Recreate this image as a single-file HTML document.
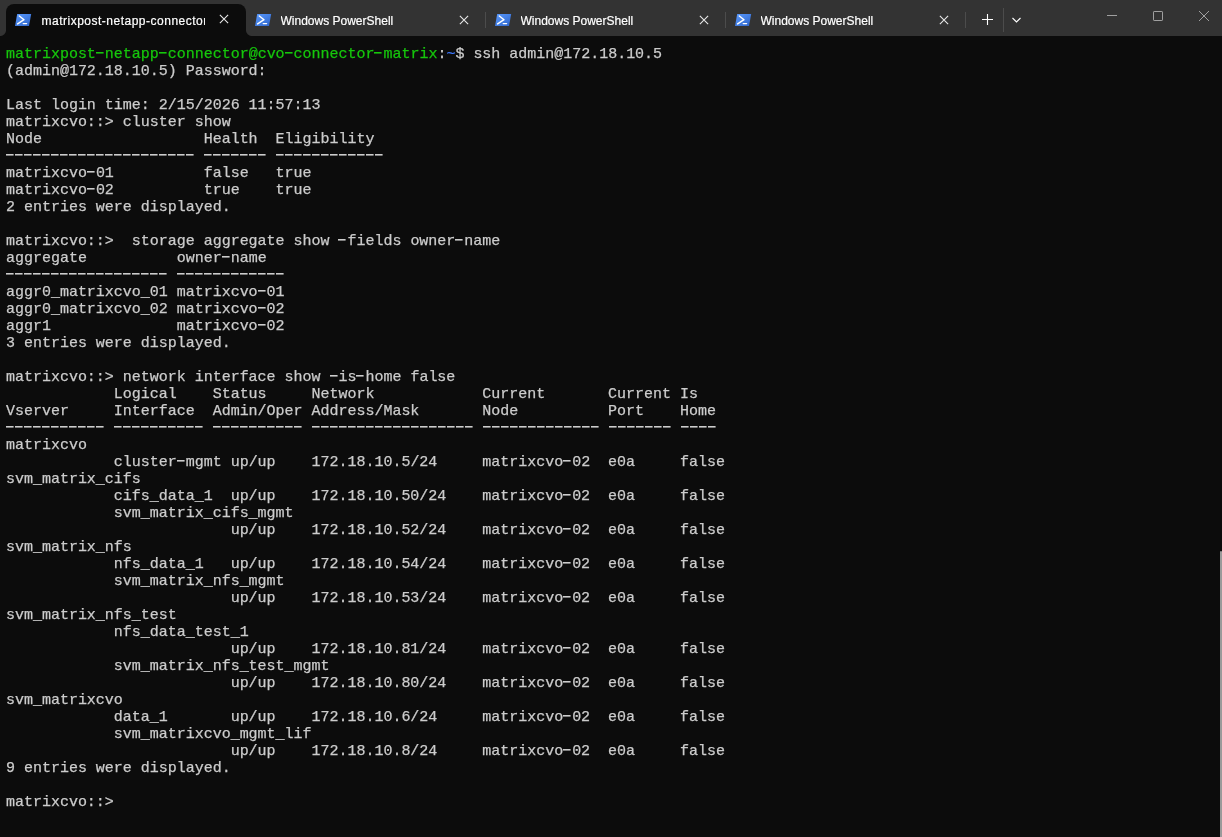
<!DOCTYPE html>
<html><head><meta charset="utf-8">
<style>
html,body{margin:0;padding:0;width:1222px;height:837px;overflow:hidden;background:#0c0c0c;}
#bar{will-change:transform;position:absolute;left:0;top:0;width:1222px;height:36px;background:#333333;}
.tab{position:absolute;top:4px;height:32px;width:240px;}
.tab.active{background:#0c0c0c;border-radius:8px 8px 0 0;}
.tab.active:before,.tab.active:after{content:"";position:absolute;bottom:0;width:6px;height:6px;background:transparent;}
.tab.active:before{left:-6px;background:radial-gradient(circle at 0 0,transparent 5.5px,#0c0c0c 6.5px);}
.tab.active:after{right:-6px;background:radial-gradient(circle at 100% 0,transparent 5.5px,#0c0c0c 6.5px);}
.tab svg.ic{position:absolute;left:9px;top:10.2px;}
.tab .t{position:absolute;left:34.5px;top:9px;font:12px/16px "Liberation Sans",sans-serif;color:#ffffff;-webkit-text-stroke:0.2px #fff;white-space:nowrap;overflow:hidden;width:180px;}
.tab svg.x{position:absolute;left:212.4px;top:10.4px;}
.tab.active svg.x{top:9.4px;}
.sep{position:absolute;width:1px;background:#4c4c4c;}
#term{will-change:transform;position:absolute;left:6px;top:46px;margin:0;letter-spacing:-0.015625px;font:15px/17px "Liberation Mono",monospace;color:#cccccc;white-space:pre;-webkit-text-stroke:0.25px #cccccc;}
i{font-style:normal;color:transparent;-webkit-text-stroke-width:0;background:linear-gradient(#cccccc,#cccccc) 0px 5.9px/7.6px 1.6px no-repeat;}
.g i{background-image:linear-gradient(#16c60c,#16c60c);}
.g{color:#16c60c;-webkit-text-stroke-color:#16c60c;}
.b{color:#3b78ff;-webkit-text-stroke-color:#3b78ff;}
#sb{position:absolute;left:1220px;top:551px;width:2px;height:286px;background:#9a9a9a;border-radius:1px 1px 0 0;}
</style></head><body>
<svg width="0" height="0" style="position:absolute">
  <defs>
    <linearGradient id="psg" x1="0" y1="0" x2="1" y2="1">
      <stop offset="0" stop-color="#5a9bff"/>
      <stop offset="1" stop-color="#2d63c8"/>
    </linearGradient>
  </defs>
</svg>
<div id="bar">
  <div class="tab active" style="left:6px">
    <svg class="ic" width="18" height="14"><path d="M2.2 0.1 H16.2 L14 12 H0 Z" fill="url(#psg)"/>
      <path d="M4.3 2 L9 5.7 L2.6 9.9" fill="none" stroke="#fff" stroke-width="1.45" stroke-linecap="round" stroke-linejoin="round"/>
      <path d="M8.2 9.6 H11.6" fill="none" stroke="#fff" stroke-width="1.3" stroke-linecap="round"/></svg>
    <div class="t" style="width:163px;left:35.5px;letter-spacing:0.5px">matrixpost-netapp-connector</div>
    <svg class="x" width="12" height="12"><path d="M1.88 1.88 L10.12 10.12 M10.12 1.88 L1.88 10.12" stroke="#e6e6e6" stroke-width="1.1" fill="none"/></svg>
  </div>
  <div class="tab" style="left:246px">
    <svg class="ic" width="18" height="14"><path d="M2.2 0.1 H16.2 L14 12 H0 Z" fill="url(#psg)"/>
      <path d="M4.3 2 L9 5.7 L2.6 9.9" fill="none" stroke="#fff" stroke-width="1.45" stroke-linecap="round" stroke-linejoin="round"/>
      <path d="M8.2 9.6 H11.6" fill="none" stroke="#fff" stroke-width="1.3" stroke-linecap="round"/></svg>
    <div class="t">Windows PowerShell</div>
    <svg class="x" width="12" height="12"><path d="M1.88 1.88 L10.12 10.12 M10.12 1.88 L1.88 10.12" stroke="#e6e6e6" stroke-width="1.1" fill="none"/></svg>
  </div>
  <div class="sep" style="left:485px;top:12px;height:16px"></div>
  <div class="tab" style="left:486px">
    <svg class="ic" width="18" height="14"><path d="M2.2 0.1 H16.2 L14 12 H0 Z" fill="url(#psg)"/>
      <path d="M4.3 2 L9 5.7 L2.6 9.9" fill="none" stroke="#fff" stroke-width="1.45" stroke-linecap="round" stroke-linejoin="round"/>
      <path d="M8.2 9.6 H11.6" fill="none" stroke="#fff" stroke-width="1.3" stroke-linecap="round"/></svg>
    <div class="t">Windows PowerShell</div>
    <svg class="x" width="12" height="12"><path d="M1.88 1.88 L10.12 10.12 M10.12 1.88 L1.88 10.12" stroke="#e6e6e6" stroke-width="1.1" fill="none"/></svg>
  </div>
  <div class="sep" style="left:725px;top:12px;height:16px"></div>
  <div class="tab" style="left:726px">
    <svg class="ic" width="18" height="14"><path d="M2.2 0.1 H16.2 L14 12 H0 Z" fill="url(#psg)"/>
      <path d="M4.3 2 L9 5.7 L2.6 9.9" fill="none" stroke="#fff" stroke-width="1.45" stroke-linecap="round" stroke-linejoin="round"/>
      <path d="M8.2 9.6 H11.6" fill="none" stroke="#fff" stroke-width="1.3" stroke-linecap="round"/></svg>
    <div class="t">Windows PowerShell</div>
    <svg class="x" width="12" height="12"><path d="M1.88 1.88 L10.12 10.12 M10.12 1.88 L1.88 10.12" stroke="#e6e6e6" stroke-width="1.1" fill="none"/></svg>
  </div>
  <div class="sep" style="left:965px;top:12px;height:16px"></div>
  <svg style="position:absolute;left:980px;top:12px" width="16" height="16"><path d="M2 7.5 H13 M7.5 2 V13" stroke="#ffffff" stroke-width="1.1" fill="none"/></svg>
  <div class="sep" style="left:1003px;top:8px;height:24px"></div>
  <svg style="position:absolute;left:1009px;top:14px" width="16" height="12"><path d="M3.5 4 L7.5 8 L11.5 4" stroke="#ffffff" stroke-width="1.1" fill="none"/></svg>
  <svg style="position:absolute;left:1100px;top:8px" width="122" height="20">
    <path d="M7 7.5 H17" stroke="#a0a0a0" stroke-width="1" fill="none"/>
    <rect x="53.5" y="3.5" width="9" height="9" rx="0.6" stroke="#a0a0a0" stroke-width="1" fill="none"/>
    <path d="M99 3 L109 13 M109 3 L99 13" stroke="#a0a0a0" stroke-width="1" fill="none"/>
  </svg>
</div>
<pre id="term"><span class="g">matrixpost<i>-</i>netapp<i>-</i>connector@cvo<i>-</i>connector<i>-</i>matrix</span>:<span class="b">~</span>$ ssh admin@172.18.10.5
(admin@172.18.10.5) Password:

Last login time: 2/15/2026 11:57:13
matrixcvo::&gt; cluster show
Node                  Health  Eligibility
<i>-</i><i>-</i><i>-</i><i>-</i><i>-</i><i>-</i><i>-</i><i>-</i><i>-</i><i>-</i><i>-</i><i>-</i><i>-</i><i>-</i><i>-</i><i>-</i><i>-</i><i>-</i><i>-</i><i>-</i><i>-</i> <i>-</i><i>-</i><i>-</i><i>-</i><i>-</i><i>-</i><i>-</i> <i>-</i><i>-</i><i>-</i><i>-</i><i>-</i><i>-</i><i>-</i><i>-</i><i>-</i><i>-</i><i>-</i><i>-</i>
matrixcvo<i>-</i>01          false   true
matrixcvo<i>-</i>02          true    true
2 entries were displayed.

matrixcvo::&gt;  storage aggregate show <i>-</i>fields owner<i>-</i>name
aggregate          owner<i>-</i>name
<i>-</i><i>-</i><i>-</i><i>-</i><i>-</i><i>-</i><i>-</i><i>-</i><i>-</i><i>-</i><i>-</i><i>-</i><i>-</i><i>-</i><i>-</i><i>-</i><i>-</i><i>-</i> <i>-</i><i>-</i><i>-</i><i>-</i><i>-</i><i>-</i><i>-</i><i>-</i><i>-</i><i>-</i><i>-</i><i>-</i>
aggr0_matrixcvo_01 matrixcvo<i>-</i>01
aggr0_matrixcvo_02 matrixcvo<i>-</i>02
aggr1              matrixcvo<i>-</i>02
3 entries were displayed.

matrixcvo::&gt; network interface show <i>-</i>is<i>-</i>home false
            Logical    Status     Network            Current       Current Is
Vserver     Interface  Admin/Oper Address/Mask       Node          Port    Home
<i>-</i><i>-</i><i>-</i><i>-</i><i>-</i><i>-</i><i>-</i><i>-</i><i>-</i><i>-</i><i>-</i> <i>-</i><i>-</i><i>-</i><i>-</i><i>-</i><i>-</i><i>-</i><i>-</i><i>-</i><i>-</i> <i>-</i><i>-</i><i>-</i><i>-</i><i>-</i><i>-</i><i>-</i><i>-</i><i>-</i><i>-</i> <i>-</i><i>-</i><i>-</i><i>-</i><i>-</i><i>-</i><i>-</i><i>-</i><i>-</i><i>-</i><i>-</i><i>-</i><i>-</i><i>-</i><i>-</i><i>-</i><i>-</i><i>-</i> <i>-</i><i>-</i><i>-</i><i>-</i><i>-</i><i>-</i><i>-</i><i>-</i><i>-</i><i>-</i><i>-</i><i>-</i><i>-</i> <i>-</i><i>-</i><i>-</i><i>-</i><i>-</i><i>-</i><i>-</i> <i>-</i><i>-</i><i>-</i><i>-</i>
matrixcvo
            cluster<i>-</i>mgmt up/up    172.18.10.5/24     matrixcvo<i>-</i>02  e0a     false
svm_matrix_cifs
            cifs_data_1  up/up    172.18.10.50/24    matrixcvo<i>-</i>02  e0a     false
            svm_matrix_cifs_mgmt
                         up/up    172.18.10.52/24    matrixcvo<i>-</i>02  e0a     false
svm_matrix_nfs
            nfs_data_1   up/up    172.18.10.54/24    matrixcvo<i>-</i>02  e0a     false
            svm_matrix_nfs_mgmt
                         up/up    172.18.10.53/24    matrixcvo<i>-</i>02  e0a     false
svm_matrix_nfs_test
            nfs_data_test_1
                         up/up    172.18.10.81/24    matrixcvo<i>-</i>02  e0a     false
            svm_matrix_nfs_test_mgmt
                         up/up    172.18.10.80/24    matrixcvo<i>-</i>02  e0a     false
svm_matrixcvo
            data_1       up/up    172.18.10.6/24     matrixcvo<i>-</i>02  e0a     false
            svm_matrixcvo_mgmt_lif
                         up/up    172.18.10.8/24     matrixcvo<i>-</i>02  e0a     false
9 entries were displayed.

matrixcvo::&gt;</pre>
<div id="sb"></div>
</body></html>
